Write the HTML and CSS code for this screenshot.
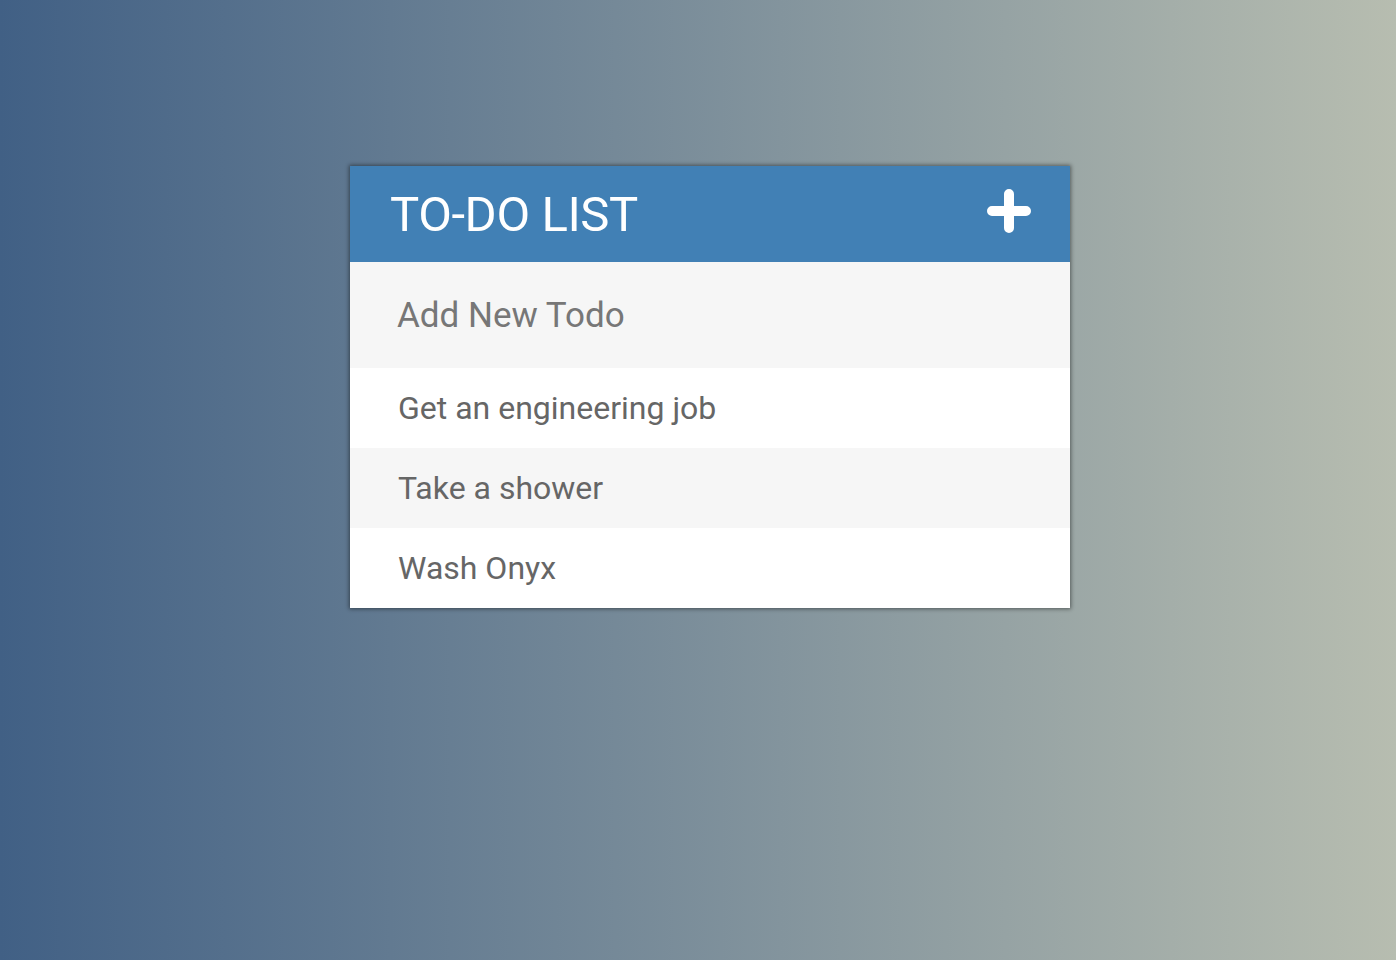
FILE: index.html
```html
<!DOCTYPE html>
<html>
<head>
<meta charset="utf-8">
<link rel="stylesheet" href="styles.css">
</head>
<body>
<div class="page">
  <div class="card">
    <div class="header">
      <h1 class="title">TO-DO LIST</h1>
      <svg class="plus" width="44" height="44" viewBox="0 0 44 44">
        <path d="M22 5 V39 M5 22 H39" stroke="#fff" stroke-width="10" stroke-linecap="round" fill="none"/>
      </svg>
    </div>
    <div class="new-row">
      <input class="new-input" type="text" placeholder="Add New Todo">
    </div>
    <ul class="list">
      <li class="item">Get an engineering job</li>
      <li class="item alt">Take a shower</li>
      <li class="item">Wash Onyx</li>
    </ul>
  </div>
</div>
</body>
</html>
```

FILE: styles.css
```css
html, body {
  margin: 0;
  padding: 0;
  height: 100%;
}
body {
  background: linear-gradient(to right, #416085, #b7bdb0);
  font-family: Roboto, "Liberation Sans", sans-serif;
}
.page {
  display: flex;
  justify-content: center;
  padding-top: 166px;
  padding-left: 24px;
}
.card {
  width: 720px;
  background: #fff;
  box-shadow: 0 0 4px 1px rgba(0,0,0,0.45);
}
.header {
  height: 96px;
  background: #4180b5;
  display: flex;
  align-items: center;
  justify-content: space-between;
  padding: 0 39px 0 40px;
}
.title {
  margin: 0;
  color: #fff;
  font-weight: 400;
  font-size: 49px;
  line-height: 1;
  letter-spacing: -0.4px;
}
.plus {
  display: block;
  margin-top: -6px;
}
.new-row {
  height: 106px;
  background: #f6f6f6;
  display: flex;
  align-items: center;
}
.new-input {
  border: none;
  outline: none;
  background: transparent;
  width: 100%;
  padding: 0 0 0 47px;
  font-family: Roboto, "Liberation Sans", sans-serif;
  font-size: 35px;
  color: #666;
}
.new-input::placeholder {
  color: #777;
}
.list {
  list-style: none;
  margin: 0;
  padding: 0;
}
.item {
  height: 80px;
  display: flex;
  align-items: center;
  padding-left: 48px;
  font-size: 32px;
  color: #666;
  background: #fff;
}
.item.alt {
  background: #f6f6f6;
}
```
